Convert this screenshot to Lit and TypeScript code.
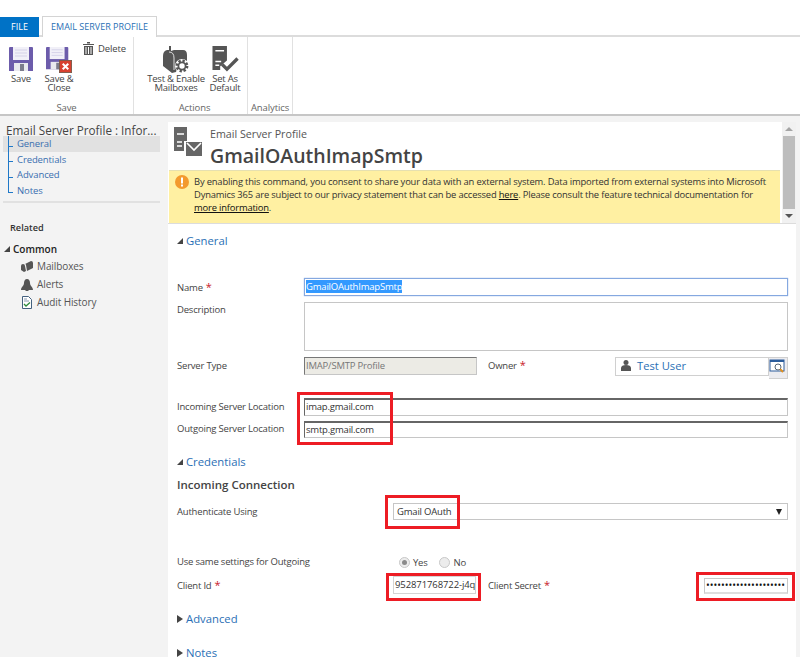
import { LitElement, html, css, svg } from "lit";
import { customElement } from "lit/decorators.js";

const saveIcon = svg`<path d="M0 1q0-1 1-1h22q1 0 1 1v23H0z" fill="#6c5cab"/><rect x="4" y="0" width="16" height="13" fill="#f1f0f8"/><path d="M6 3h12M6 6h12M6 9h12" stroke="#d5d2e8"/><rect x="5" y="16" width="14" height="8" fill="#e9e9ee"/><rect x="11" y="17" width="4" height="7" fill="#7c7c8c"/>`;

@customElement("app-root")
export class AppRoot extends LitElement {
  static styles = css`
    :host {
      display: block;
      position: relative;
      width: 800px;
      height: 657px;
      overflow: hidden;
      background: #f3f3f3;
      font-family: "Open Sans", "Noto Sans", sans-serif;
      font-size: 10px;
      color: #444;
    }
    /* tabs */
    .tabs {
      display: flex;
      gap: 3px;
      height: 37px;
      box-sizing: border-box;
      padding-top: 16px;
      background: #fff;
      border-bottom: 2px solid #dcdcdc;
    }
    .tab-file {
      width: 39px;
      height: 20px;
      margin-top: 1px;
      background: #0072c6;
      color: #fff;
      text-align: center;
      line-height: 20px;
      font-size: 9px;
    }
    .tab-active {
      width: 115px;
      height: 21px;
      box-sizing: border-box;
      background: #fff;
      border: 1px solid #d4d4d4;
      border-bottom: none;
      color: #2a6fb5;
      text-align: center;
      line-height: 20px;
      font-size: 9px;
      white-space: nowrap;
    }
    /* ribbon */
    .ribbon {
      display: flex;
      height: 79px;
      box-sizing: border-box;
      background: #fff;
      border-bottom: 2px solid #c6c6c6;
    }
    .group {
      display: flex;
      flex-direction: column;
      box-sizing: border-box;
      border-right: 1px solid #e1e1e1;
    }
    .group-items {
      display: flex;
      flex: 1;
      min-height: 0;
    }
    .group-name {
      height: 12px;
      text-align: center;
      color: #666;
      font-size: 9.5px;
      line-height: 12px;
      letter-spacing: -0.1px;
    }
    .tool {
      display: flex;
      flex-direction: column;
      align-items: center;
      font-size: 9.5px;
      line-height: 9px;
      letter-spacing: -0.2px;
      text-align: center;
      color: #444;
      white-space: nowrap;
    }
    .tool svg {
      display: block;
      margin-bottom: 1px;
      flex: none;
    }
    .g-save { width: 134px; margin-right: 8px; }
    .g-save .group-items { padding: 10px 0 0 8px; }
    .g-actions { width: 106px; }
    .g-actions .group-items { padding: 9px 0 0 6px; gap: 5px; }
    .g-analytics { width: 45px; }
    .g-analytics .group-name { margin-top: auto; }
    .delete {
      display: flex;
      align-items: center;
      gap: 4px;
      height: 14px;
      margin: -6px 0 0 6px;
      font-size: 9.5px;
      letter-spacing: -0.1px;
    }
    /* body */
    .body {
      display: flex;
      height: 541px;
    }
    .side {
      width: 168px;
      flex: none;
      padding-top: 7px;
      box-sizing: border-box;
    }
    .side-title {
      margin-left: 6px;
      height: 13px;
      font-size: 11.7px;
      line-height: 15px;
      white-space: nowrap;
      color: #444;
    }
    .nav {
      margin: 0 8px 0 3px;
      padding-bottom: 3px;
      border-bottom: 2px solid #e1e1e1;
    }
    .nav-item {
      display: flex;
      align-items: center;
      position: relative;
      height: 15.5px;
      padding-left: 14px;
      color: #3a6fb0;
      font-size: 9.5px;
      letter-spacing: -0.1px;
    }
    .nav-item::before {
      content: "";
      position: absolute;
      left: 5px;
      top: 0;
      bottom: 0;
      width: 1px;
      background: #1f78c8;
    }
    .nav-item:last-child::before { bottom: 5px; }
    .nav-item::after {
      content: "";
      position: absolute;
      left: 5px;
      bottom: 5px;
      width: 5px;
      height: 1px;
      background: #1f78c8;
    }
    .nav-item.on {
      background: #e1e1e1;
    }
    .related {
      margin: 18px 0 0 10px;
      font-size: 9.2px;
      font-weight: 600;
      color: #333;
      line-height: 14px;
    }
    .common {
      display: flex;
      align-items: center;
      gap: 3px;
      margin: 7px 0 1px 4px;
      font-size: 10px;
      font-weight: 600;
      color: #222;
      line-height: 14px;
    }
    .rel-item {
      display: flex;
      align-items: center;
      gap: 4px;
      height: 18px;
      padding-left: 21px;
      font-size: 10px;
      letter-spacing: -0.1px;
      color: #555;
    }
    .rel-item svg { width: 12px; height: 13px; flex: none; }
    .tri-open {
      width: 0;
      height: 0;
      border-left: 6px solid transparent;
      border-bottom: 6px solid #444;
    }
    .tri-closed {
      width: 0;
      height: 0;
      border-top: 4.5px solid transparent;
      border-bottom: 4.5px solid transparent;
      border-left: 6px solid #444;
    }
    /* main */
    .main {
      width: 628px;
      margin: 6px 0 0 0;
      background: #fff;
      flex: none;
      display: flex;
      flex-direction: column;
    }
    .top {
      display: flex;
      flex: none;
      height: 101px;
      border-bottom: 1px solid #dcdcdc;
    }
    .top-left {
      width: 613px;
      flex: none;
      display: flex;
      flex-direction: column;
    }
    .head {
      display: flex;
      height: 48px;
      padding-left: 6px;
      gap: 8px;
    }
    .head svg { margin-top: 5px; }
    .entity { margin-top: 5px; font-size: 10.7px; line-height: 14px; color: #555; }
    .title { font-size: 19.5px; line-height: 30px; font-weight: 600; color: #444; white-space: nowrap; }
    .notice {
      flex: 1;
      display: flex;
      gap: 5px;
      margin: 0 1px;
      padding: 4px 0 0 6px;
      background: #fff0a2;
      border-top: 1px solid #e6e0b0;
      font-size: 9.4px;
      line-height: 13px;
      letter-spacing: -0.17px;
      color: #333;
      white-space: nowrap;
    }
    .notice svg { flex: none; }
    .notice a { color: #111; text-decoration: underline; }
    .scroll {
      width: 14px;
      margin-left: 1px;
      display: flex;
      flex-direction: column;
      align-items: center;
      background: #f1f1f1;
    }
    .thumb {
      flex: 1;
      width: 12px;
      background: #bdbdbd;
    }
    .arrow-up, .arrow-down { width: 0; height: 0; border-left: 4px solid transparent; border-right: 4px solid transparent; margin: 5px 0; }
    .arrow-up { border-bottom: 4px solid #a5a5a5; }
    .arrow-down { border-top: 4px solid #555; }
    /* form */
    .form {
      flex: none;
      padding-left: 9px;
      position: relative;
    }
    .section {
      display: flex;
      align-items: center;
      gap: 3px;
      color: #2a6fb5;
      font-size: 11.3px;
      line-height: 16px;
      height: 16px;
    }
    .row {
      display: flex;
      align-items: flex-start;
    }
    .label {
      width: 127px;
      flex: none;
      font-size: 9.5px;
      letter-spacing: -0.2px;
      color: #444;
      line-height: 18px;
      white-space: nowrap;
    }
    .label.tight { line-height: 16px; }
    .req { color: #c8202a; font-size: 11px; margin-left: 3px; }
    .input {
      box-sizing: border-box;
      width: 484px;
      border: 1px solid #c6c6c6;
      background: #fff;
      font-size: 9.5px;
      letter-spacing: -0.2px;
      line-height: 15px;
      padding-left: 1px;
      color: #333;
      white-space: nowrap;
      overflow: hidden;
    }
    .name-input { height: 18px; border: 1px solid #85a8e0; box-shadow: 0 0 1px #85a8e0; }
    .name-input span { background: #3399ff; color: #fff; }
    .desc { height: 49px; }
    .server {
      width: 173px;
      height: 18px;
      background: #ecebe5;
      border-top: 1px solid #777;
      border-left: 1px solid #777;
      color: #777;
    }
    .owner-label { width: 127px; margin-left: 11px; flex: none; font-size: 9.5px; letter-spacing: -0.2px; line-height: 16px; }
    .lookup {
      display: flex;
      align-items: center;
      box-sizing: border-box;
      width: 154px;
      height: 19px;
      gap: 6px;
      padding: 0 0 2px 5px;
      border: 1px solid #d0d0d0;
      color: #2a6fb5;
      font-size: 11.2px;
    }
    .lookup-btn {
      box-sizing: border-box;
      width: 19px;
      height: 22px;
      border: 1px solid #d0d0d0;
      border-left: none;
      background: #ececf0;
    }
    .line { height: 18px; border-top: 2px solid #666; border-left: 1px solid #666; line-height: 14px; }
    .subhead { font-size: 11.5px; font-weight: 600; color: #444; line-height: 16px; margin-top: 7px; }
    .select {
      display: flex;
      justify-content: space-between;
      align-items: center;
      width: 395px;
      height: 17px;
      padding: 0 5px 0 3px;
      line-height: 15px;
    }
    .sel-arrow { width: 0; height: 0; border-left: 3.5px solid transparent; border-right: 3.5px solid transparent; border-top: 6px solid #222; }
    .radio-row { display: flex; align-items: center; height: 18px; font-size: 9.5px; letter-spacing: -0.2px; }
    .radio {
      box-sizing: border-box;
      width: 11px;
      height: 11px;
      border-radius: 50%;
      border: 1px solid #c8c8c8;
      background: #ececec;
      display: flex;
      align-items: center;
      justify-content: center;
      margin-right: 3px;
    }
    .radio.no { margin-left: 11px; margin-right: 4px; }
    .radio i { display: block; width: 5px; height: 5px; border-radius: 50%; background: #8a8a8a; }
    .client { width: 83px; height: 18px; border-color: #d4d4d4; letter-spacing: -0.1px; }
    .secret-label { width: 216px; margin-left: 12px; flex: none; font-size: 9.5px; letter-spacing: -0.2px; line-height: 18px; }
    .secret {
      width: 84px;
      height: 16px;
      margin-top: 2px;
      border: 1px solid #c8c8c8;
      border-bottom: 2px solid #dedede;
      font-size: 10px;
      line-height: 13px;
      letter-spacing: 0;
      color: #111;
    }
    /* red annotations over the screenshot */
    .mark {
      position: absolute;
      box-sizing: border-box;
      border: 3px solid #ed1c24;
      pointer-events: none;
    }
  `;

  render() {
    return html`
      <div class="tabs">
        <div class="tab-file">FILE</div>
        <div class="tab-active">EMAIL SERVER PROFILE</div>
      </div>
      <div class="ribbon">
        <div class="group g-save">
          <div class="group-items">
            <div class="tool" style="width:26px">
              <svg width="24" height="24" viewBox="0 0 24 24" style="margin-bottom:3px">${saveIcon}</svg>
              Save
            </div>
            <div class="tool" style="width:36px;margin-left:7px">
              <svg width="26" height="26" viewBox="0 0 28 28">
                ${saveIcon}
                <rect x="14.500" y="14.500" width="13" height="13" fill="#d8412f" stroke="#7d5a4a"/>
                <path d="M18 18l6 6M24 18l-6 6" stroke="#fff" stroke-width="2.200"/>
              </svg>
              Save &amp;<br />Close
            </div>
            <div class="delete">
              <svg width="11" height="13" viewBox="0 0 11 13" fill="#555"><path d="M0 2h11v1H0zM4 0h3v1.500H4zM1 4h9v9H1z"/><path d="M3 5v7M5.500 5v7M8 5v7" stroke="#fff"/></svg>
              Delete
            </div>
          </div>
          <div class="group-name">Save</div>
        </div>
        <div class="group g-actions">
          <div class="group-items">
            <div class="tool" style="width:56px">
              <svg width="26" height="27" viewBox="0 0 26 27" fill="#555">
                <path d="M6 0h2v5l3-1h9q4 0 4 5v6l-6 2-3 3-2 6-4 1-9-7V10q0-5 4-6h2z"/>
                <path d="M6 6q5 0 5 6v12" fill="none" stroke="#fff" stroke-width=".8"/>
                <circle cx="19" cy="20" r="7" fill="#fff"/>
                <circle cx="19" cy="20" r="5" fill="none" stroke="#555" stroke-width="2.800" stroke-dasharray="2.200 1.700"/>
                <circle cx="19" cy="20" r="3.600" fill="none" stroke="#555" stroke-width="1.800"/>
              </svg>
              Test &amp; Enable<br />Mailboxes
            </div>
            <div class="tool" style="width:32px">
              <svg width="29" height="27" viewBox="0 0 29 28" fill="#555">
                <path d="M1 0h15v15l-7 6v4H1z"/>
                <path d="M4 5h9M4 16h6M4 20h4" stroke="#fff" stroke-width="1.500"/>
                <path d="M11 19l5 5 11-11" fill="none" stroke="#555" stroke-width="3.500"/>
              </svg>
              Set As<br />Default
            </div>
          </div>
          <div class="group-name">Actions</div>
        </div>
        <div class="group g-analytics">
          <div class="group-name">Analytics</div>
        </div>
      </div>
      <div class="body">
        <div class="side">
          <div class="side-title">Email Server Profile : Infor...</div>
          <div class="nav">
            <div class="nav-item on">General</div>
            <div class="nav-item">Credentials</div>
            <div class="nav-item">Advanced</div>
            <div class="nav-item">Notes</div>
          </div>
          <div class="related">Related</div>
          <div class="common"><span class="tri-open"></span>Common</div>
          <div class="rel-item">
            <svg viewBox="0 0 12 13" fill="#555"><path d="M0 6q0-2 2-2t2 2l1 5-2 1-3-2zM4 4l6-3q2 0 2 2v5l-6 3-1-6q0-1-1-1z"/></svg>
            Mailboxes
          </div>
          <div class="rel-item">
            <svg viewBox="0 0 12 13" fill="#555"><path d="M6 1c2 0 3 2 3 4 0 3 3 4 3 7H0c0-3 3-4 3-7 0-2 1-4 3-4z"/><rect x="4.500" y="12" width="3" height="1"/></svg>
            Alerts
          </div>
          <div class="rel-item">
            <svg viewBox="0 0 12 13"><path d="M1.500 .500h6l3 3v9h-9z" fill="#fff" stroke="#44617f"/><path d="M3 3h3M3 5h5" stroke="#8a9ab0"/><path d="M3 8l2 2 4-3.500" fill="none" stroke="#2e8b3d" stroke-width="1.300"/></svg>
            Audit History
          </div>
        </div>
        <div class="main">
          <div class="top">
            <div class="top-left">
              <div class="head">
                <svg width="28" height="29" viewBox="0 0 28 29" fill="#666">
                  <path d="M0 0h13v14H10v10H0z"/>
                  <path d="M3 7h7M3 15h5M3 19h5" stroke="#fff" stroke-width="1.500"/>
                  <path d="M12 15h16v14H12z"/>
                  <path d="M13 16l7 7 7-7" fill="none" stroke="#fff" stroke-width="1.600"/>
                </svg>
                <div>
                  <div class="entity">Email Server Profile</div>
                  <div class="title">GmailOAuthImapSmtp</div>
                </div>
              </div>
              <div class="notice">
                <svg width="14" height="14" viewBox="0 0 14 14"><circle cx="7" cy="7" r="7" fill="#f39a2d"/><rect x="6" y="2.500" width="2" height="6" fill="#fff"/><rect x="6" y="9.500" width="2" height="2" fill="#fff"/></svg>
                <div>
                  By enabling this command, you consent to share your data with an external system. Data imported from external systems into Microsoft<br />
                  Dynamics 365 are subject to our privacy statement that can be accessed <a>here</a>. Please consult the feature technical documentation for<br />
                  <a>more information</a>.
                </div>
              </div>
            </div>
            <div class="scroll">
              <span class="arrow-up"></span>
              <div class="thumb"></div>
              <span class="arrow-down"></span>
            </div>
          </div>
          <div class="form">
            <div class="section" style="margin-top:9px"><span class="tri-open"></span>General</div>
            <div class="row" style="margin-top:29px">
              <div class="label">Name<span class="req">*</span></div>
              <div class="input name-input"><span>GmailOAuthImapSmtp</span></div>
            </div>
            <div class="row" style="margin-top:5px">
              <div class="label tight">Description</div>
              <div class="input desc"></div>
            </div>
            <div class="row" style="margin-top:6px">
              <div class="label">Server Type</div>
              <div class="input server">IMAP/SMTP Profile</div>
              <div class="owner-label">Owner<span class="req">*</span></div>
              <div class="lookup">
                <svg width="10" height="11" viewBox="0 0 10 11" fill="#555"><circle cx="5" cy="2.500" r="2.500"/><path d="M0 11V8c0-2 2-3 5-3s5 1 5 3v3z"/></svg>
                Test User
              </div>
              <div class="lookup-btn">
                <svg width="17" height="16" viewBox="0 0 17 16"><rect x="1" y="2" width="14" height="11" fill="#fff" stroke="#2c5d9c"/><rect x="1" y="2" width="14" height="2" fill="#2c5d9c"/><circle cx="9" cy="9" r="3" fill="none" stroke="#567"/><path d="M11 11l3 3" stroke="#e09020" stroke-width="2"/></svg>
              </div>
            </div>
            <div class="row" style="margin-top:1px">
              <div class="label" style="margin-top:18px">Incoming Server Location</div>
              <div class="input line" style="margin-top:18px">imap.gmail.com</div>
            </div>
            <div class="row" style="margin-top:5px">
              <div class="label tight">Outgoing Server Location</div>
              <div class="input line" style="height:17px">smtp.gmail.com</div>
            </div>
            <div class="section" style="margin-top:16px"><span class="tri-open"></span>Credentials</div>
            <div class="subhead">Incoming Connection</div>
            <div class="row" style="margin-top:10px">
              <div class="label" style="width:216px">Authenticate Using</div>
              <div class="input select">Gmail OAuth<span class="sel-arrow"></span></div>
            </div>
            <div class="row" style="margin-top:32px">
              <div class="label" style="width:222px">Use same settings for Outgoing</div>
              <div class="radio-row">
                <span class="radio"><i></i></span>Yes
                <span class="radio no"></span>No
              </div>
            </div>
            <div class="row" style="margin-top:5px">
              <div class="label" style="width:216px">Client Id<span class="req">*</span></div>
              <div class="input client">952871768722-j4q</div>
              <div class="secret-label">Client Secret<span class="req">*</span></div>
              <div class="input secret">•••••••••••••••••••••</div>
            </div>
            <div class="section" style="margin-top:16px"><span class="tri-closed"></span>Advanced</div>
            <div class="section" style="margin-top:18px"><span class="tri-closed"></span>Notes</div>
          </div>
        </div>
      </div>
      <div class="mark" style="left:297px;top:392px;width:96px;height:53px"></div>
      <div class="mark" style="left:385px;top:495px;width:75px;height:34px"></div>
      <div class="mark" style="left:386px;top:573px;width:95px;height:28px"></div>
      <div class="mark" style="left:696px;top:572px;width:99px;height:29px"></div>
    `;
  }
}
